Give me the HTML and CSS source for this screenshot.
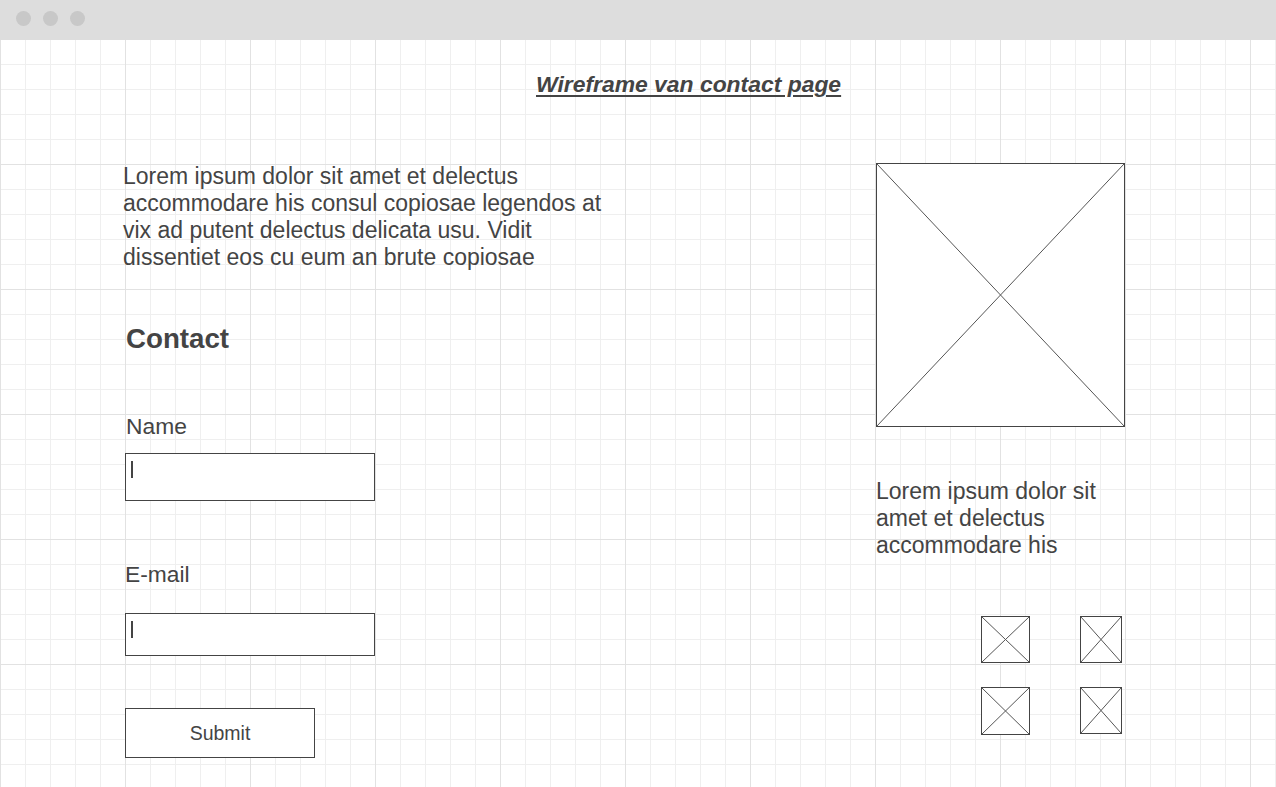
FILE: index.html
```html
<!DOCTYPE html>
<html>
<head>
<meta charset="utf-8">
<link rel="stylesheet" href="styles.css">
</head>
<body>
<div class="window">
  <div class="titlebar">
    <span class="dot"></span><span class="dot"></span><span class="dot"></span>
  </div>
  <div class="canvas">
    <h1 class="title">Wireframe van contact page</h1>
    <div class="columns">
      <div class="left">
        <p class="intro">Lorem ipsum dolor sit amet et delectus accommodare his consul copiosae legendos at vix ad putent delectus delicata usu. Vidit dissentiet eos cu eum an brute copiosae</p>
        <h2 class="contact">Contact</h2>
        <label class="label name-label">Name</label>
        <div class="input input-name"><span class="caret"></span></div>
        <label class="label mail-label">E-mail</label>
        <div class="input input-mail"><span class="caret"></span></div>
        <div class="button">Submit</div>
      </div>
      <div class="right">
        <div class="ph ph-big">
          <svg viewBox="0 0 100 100" preserveAspectRatio="none"><line x1="0" y1="0" x2="100" y2="100" vector-effect="non-scaling-stroke"/><line x1="100" y1="0" x2="0" y2="100" vector-effect="non-scaling-stroke"/></svg>
        </div>
        <p class="side">Lorem ipsum dolor sit amet et delectus accommodare his</p>
        <div class="icons">
          <div class="ph ic ic-a"><svg viewBox="0 0 100 100" preserveAspectRatio="none"><line x1="0" y1="0" x2="100" y2="100" vector-effect="non-scaling-stroke"/><line x1="100" y1="0" x2="0" y2="100" vector-effect="non-scaling-stroke"/></svg></div>
          <div class="ph ic ic-b"><svg viewBox="0 0 100 100" preserveAspectRatio="none"><line x1="0" y1="0" x2="100" y2="100" vector-effect="non-scaling-stroke"/><line x1="100" y1="0" x2="0" y2="100" vector-effect="non-scaling-stroke"/></svg></div>
          <div class="ph ic ic-c"><svg viewBox="0 0 100 100" preserveAspectRatio="none"><line x1="0" y1="0" x2="100" y2="100" vector-effect="non-scaling-stroke"/><line x1="100" y1="0" x2="0" y2="100" vector-effect="non-scaling-stroke"/></svg></div>
          <div class="ph ic ic-d"><svg viewBox="0 0 100 100" preserveAspectRatio="none"><line x1="0" y1="0" x2="100" y2="100" vector-effect="non-scaling-stroke"/><line x1="100" y1="0" x2="0" y2="100" vector-effect="non-scaling-stroke"/></svg></div>
        </div>
      </div>
    </div>
  </div>
</div>
</body>
</html>
```

FILE: styles.css
```css
* { box-sizing: border-box; }
html, body {
  margin: 0;
  padding: 0;
  background: #fff;
}
body {
  font-family: "Liberation Sans", Arial, sans-serif;
  color: #444;
}
.window {
  width: 1276px;
  height: 787px;
  display: flex;
  flex-direction: column;
  overflow: hidden;
}
.titlebar {
  height: 40px;
  flex: none;
  background: #dddddd;
  display: flex;
  align-items: center;
  padding-left: 16px;
  gap: 12px;
  padding-bottom: 4px;
}
.dot {
  width: 15px;
  height: 15px;
  border-radius: 50%;
  background: #c8c8c8;
}
.canvas {
  flex: 1;
  background-color: #fff;
  background-image:
    linear-gradient(to right, #e2e2e2 1px, transparent 1px),
    linear-gradient(to bottom, #e2e2e2 1px, transparent 1px),
    linear-gradient(to right, #efefef 1px, transparent 1px),
    linear-gradient(to bottom, #efefef 1px, transparent 1px);
  background-size: 125px 125px, 125px 125px, 25px 25px, 25px 25px;
  background-position: 0 -1px, 0 -1px, 0 -1px, 0 -1px;
}
.title {
  margin: 31px 0 0 536px;
  font-size: 22.9px;
  line-height: 27px;
  font-weight: bold;
  font-style: italic;
  text-decoration: underline;
  text-underline-offset: 3px;
  color: #444;
}
.columns {
  display: flex;
  margin-top: 65px;
}
.left {
  margin-left: 123px;
  width: 490px;
  display: flex;
  flex-direction: column;
  align-items: flex-start;
}
.intro {
  margin: 0;
  font-size: 23px;
  line-height: 27px;
}
.contact {
  margin: 51px 0 0 3px;
  font-size: 27.7px;
  line-height: 34px;
  font-weight: bold;
}
.label {
  display: block;
  font-size: 22.8px;
  line-height: 27px;
}
.name-label { margin: 57px 0 0 3px; }
.mail-label { margin: 60px 0 0 2px; }
.input {
  width: 250px;
  border: 1px solid #444;
  background: #fff;
  margin-left: 2px;
  padding: 7px 0 0 5px;
}
.input-name { height: 48px; margin-top: 13px; }
.input-mail { height: 43px; margin-top: 25px; }
.caret {
  display: block;
  width: 2px;
  height: 17px;
  background: #444;
}
.button {
  margin: 52px 0 0 2px;
  width: 190px;
  height: 50px;
  border: 1px solid #444;
  background: #fff;
  display: flex;
  align-items: center;
  justify-content: center;
  font-size: 19.5px;
}
.right {
  margin-left: 263px;
  width: 250px;
  display: flex;
  flex-direction: column;
}
.ph {
  border: 1px solid #444;
  background: #fff;
}
.ph svg {
  display: block;
  width: 100%;
  height: 100%;
}
.ph line {
  stroke: #555;
  stroke-width: 1;
}
.ph-big {
  width: 249px;
  height: 264px;
}
.side {
  margin: 51px 0 0 0;
  font-size: 23px;
  line-height: 27px;
}
.icons {
  margin: 57px 0 0 105px;
  display: grid;
  grid-template-columns: 49px 42px;
  column-gap: 50px;
  row-gap: 24px;
}
.ic-a { width: 49px; height: 47px; }
.ic-b { width: 42px; height: 47px; }
.ic-c { width: 49px; height: 48px; }
.ic-d { width: 42px; height: 47px; }
```
